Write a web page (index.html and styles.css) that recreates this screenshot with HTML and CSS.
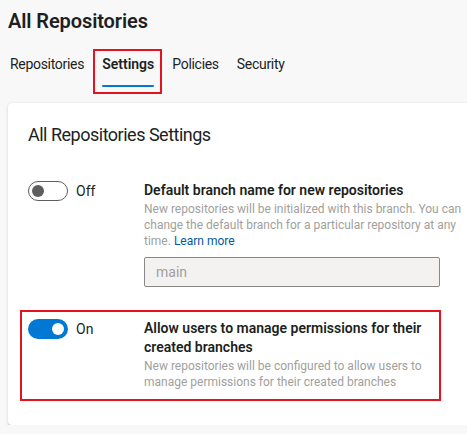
FILE: index.html
```html
<!DOCTYPE html>
<html>
<head>
<meta charset="utf-8">
<link rel="stylesheet" href="styles.css">
</head>
<body>
<div class="page">
  <h1 class="title">All Repositories</h1>
  <nav class="tabs">
    <span class="tab">Repositories</span>
    <span class="tab tab-selected">Settings</span>
    <span class="tab">Policies</span>
    <span class="tab">Security</span>
  </nav>
  <section class="card">
    <h2 class="card-title">All Repositories Settings</h2>
    <div class="setting">
      <div class="toggle-wrap">
        <span class="toggle toggle-off"><span class="knob"></span></span>
        <span class="toggle-label">Off</span>
      </div>
      <div class="setting-body">
        <div class="setting-title">Default branch name for new repositories</div>
        <div class="setting-desc">New repositories will be initialized with this branch. You can change the default branch for a particular repository at any time. <a class="link" href="#">Learn more</a></div>
        <div class="text-input">main</div>
      </div>
    </div>
    <div class="highlight">
      <div class="setting">
        <div class="toggle-wrap">
          <span class="toggle toggle-on"><span class="knob"></span></span>
          <span class="toggle-label">On</span>
        </div>
        <div class="setting-body">
          <div class="setting-title">Allow users to manage permissions for their created branches</div>
          <div class="setting-desc">New repositories will be configured to allow users to manage permissions for their created branches</div>
        </div>
      </div>
    </div>
  </section>
</div>
</body>
</html>
```

FILE: styles.css
```css
html, body {
  margin: 0;
  padding: 0;
  background: #f8f8f8;
  font-family: Roboto, "Liberation Sans", sans-serif;
  color: #201f1e;
  overflow: hidden;
}
.page {
  padding: 7px 0 0 8px;
}
.title {
  margin: 0;
  font-size: 20px;
  line-height: 28px;
  font-weight: 600;
  letter-spacing: -0.1px;
}
.tabs {
  display: flex;
  gap: 18px;
  margin: 15px 0 16px 2px;
}
.tab {
  position: relative;
  font-size: 14px;
  line-height: 20px;
  height: 37px;
  padding-top: 4px;
  box-sizing: border-box;
  letter-spacing: -0.3px;
}
.tab-selected {
  font-weight: 600;
  letter-spacing: 0;
}
.tab-selected::before {
  content: "";
  position: absolute;
  left: 0;
  right: 0;
  bottom: 0;
  height: 2px;
  border-radius: 1px;
  background: #0078d4;
}
.tab-selected::after {
  content: "";
  position: absolute;
  left: -9px;
  right: -8px;
  top: -1px;
  bottom: -7px;
  border: 2px solid #e3141f;
}
.card {
  background: #fff;
  border-radius: 4px 0 0 4px;
  box-shadow: 0 1.6px 3.6px rgba(0,0,0,.13), 0 0.3px 0.9px rgba(0,0,0,.11);
  padding: 20px 0 24px 20px;
}
.card-title {
  margin: 0 0 34px;
  font-size: 18px;
  line-height: 24px;
  font-weight: 400;
  letter-spacing: -0.5px;
}
.setting {
  display: flex;
}
.toggle-wrap {
  display: flex;
  align-items: center;
  gap: 8px;
  width: 116px;
  height: 20px;
  flex: none;
}
.toggle {
  position: relative;
  box-sizing: border-box;
  width: 40px;
  height: 20px;
  border-radius: 10px;
  flex: none;
}
.toggle-off {
  border: 1px solid #605e5c;
  background: #fff;
}
.toggle-on {
  background: #0078d4;
}
.knob {
  position: absolute;
  top: 50%;
  width: 12px;
  height: 12px;
  margin-top: -6px;
  border-radius: 50%;
}
.toggle-off .knob {
  left: 3px;
  background: #605e5c;
}
.toggle-on .knob {
  right: 4px;
  background: #fff;
}
.toggle-label {
  font-size: 14px;
  line-height: 20px;
}
.setting-body {
  width: 318px;
}
.setting-title {
  font-size: 14px;
  line-height: 19px;
  font-weight: 600;
}
.setting-desc {
  font-size: 12px;
  line-height: 16px;
  color: #a19f9d;
  margin-top: 1px;
}
.link {
  color: #005a9e;
  text-decoration: none;
}
.text-input {
  box-sizing: border-box;
  width: 296px;
  height: 30px;
  margin-top: 8px;
  border: 1px solid #8a8886;
  border-radius: 2px;
  background: #f3f2f1;
  color: #a19f9d;
  font-size: 14px;
  line-height: 28px;
  padding-left: 11px;
}
.highlight {
  box-sizing: border-box;
  margin: 23px 0 0 -8px;
  width: 421px;
  border: 2px solid #e3141f;
  padding: 7px 0 9px 6px;
}
```
